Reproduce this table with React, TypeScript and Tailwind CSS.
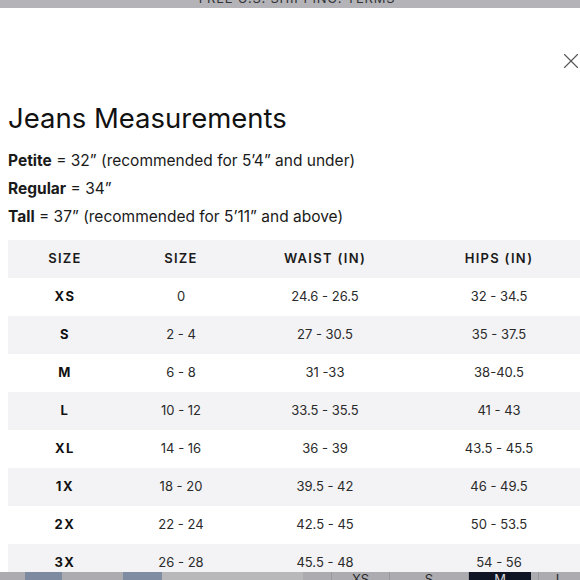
import { X } from "lucide-react"

type Row = { size: string; num: string; waist: string; hips: string }

const rows: Row[] = [
  { size: "XS", num: "0", waist: "24.6 - 26.5", hips: "32 - 34.5" },
  { size: "S", num: "2 - 4", waist: "27 - 30.5", hips: "35 - 37.5" },
  { size: "M", num: "6 - 8", waist: "31 -33", hips: "38-40.5" },
  { size: "L", num: "10 - 12", waist: "33.5 - 35.5", hips: "41 - 43" },
  { size: "XL", num: "14 - 16", waist: "36 - 39", hips: "43.5 - 45.5" },
  { size: "1X", num: "18 - 20", waist: "39.5 - 42", hips: "46 - 49.5" },
  { size: "2X", num: "22 - 24", waist: "42.5 - 45", hips: "50 - 53.5" },
  { size: "3X", num: "26 - 28", waist: "45.5 - 48", hips: "54 - 56" },
]

const cols = "grid grid-cols-[114px_118px_170px_178px] w-[580px] items-center"

export default function App() {
  return (
    <div
      className="w-[580px] h-[580px] overflow-hidden flex flex-col bg-white text-[#151515]"
      style={{ fontFamily: "Inter, 'Liberation Sans', sans-serif" }}
    >
      {/* promo strip, mostly scrolled off */}
      <div className="h-2 shrink-0 overflow-hidden bg-[#b4b4b8]">
        <div className="-mt-[8px] text-center text-[13px] leading-none tracking-[0.06em] text-[#333336] pl-[14px]">
          FREE U.S. SHIPPING. TERMS
        </div>
      </div>

      {/* close */}
      <div className="mt-[40px] h-[26px] flex justify-end -mr-[4px] shrink-0">
        <X className="w-[26px] h-[26px] text-[#555]" strokeWidth={1} />
      </div>

      <h1 className="mt-[27px] pl-2 text-[27.5px] leading-[34px] font-normal text-[#111]">
        Jeans Measurements
      </h1>

      <div className="mt-[12px] pl-2 text-[15.5px] leading-[28px] text-[#1a1a1a]">
        <p><span className="font-bold">Petite</span> = 32” (recommended for 5’4” and under)</p>
        <p><span className="font-bold">Regular</span> = 34”</p>
        <p><span className="font-bold">Tall</span> = 37” (recommended for 5’11” and above)</p>
      </div>

      {/* table */}
      <div className="mt-[9px] ml-2 flex-1 overflow-hidden">
        <div className={`${cols} h-[38px] bg-[#f3f3f5] text-[13px] font-semibold tracking-[0.1em] text-[#1a1a1a]`}>
          <div className="text-center">SIZE</div>
          <div className="text-center">SIZE</div>
          <div className="text-center">WAIST (IN)</div>
          <div className="text-center">HIPS (IN)</div>
        </div>
        {rows.map((r, i) => (
          <div
            key={r.size}
            className={`${cols} h-[38px] text-[13px] text-[#2a2a2a] ${i % 2 === 1 ? "bg-[#f3f3f5]" : "bg-white"}`}
          >
            <div className="text-center font-bold tracking-[0.12em] text-[#111]">{r.size}</div>
            <div className="text-center">{r.num}</div>
            <div className="text-center">{r.waist}</div>
            <div className="text-center">{r.hips}</div>
          </div>
        ))}
      </div>

      {/* sticky size bar peeking in at the bottom */}
      <div className="h-2 shrink-0 overflow-hidden flex bg-[#acacb0] text-[13px] leading-none text-[#2a2a2e]">
        <div className="w-[25px]" />
        <div className="w-[37px] bg-[#7d8aa0]" />
        <div className="w-[61px]" />
        <div className="w-[39px] bg-[#7f8ca2]" />
        <div className="w-[141px] bg-[#b8b8bb]" />
        <div className="w-[29px] border-r border-[#9a9a9e]" />
        <div className="w-[58px] border-r border-[#9a9a9e] flex justify-center pt-[1px]">XS</div>
        <div className="w-[79px] border-r border-[#9a9a9e] flex justify-center pt-[1px]">S</div>
        <div className="w-[62px] bg-[#0f1424] text-[#d8d8dc] flex justify-center pt-[1px]">M</div>
        <div className="w-[8px] border-r border-[#9a9a9e]" />
        <div className="flex-1 flex justify-center pt-[1px]">L</div>
      </div>
    </div>
  )
}
